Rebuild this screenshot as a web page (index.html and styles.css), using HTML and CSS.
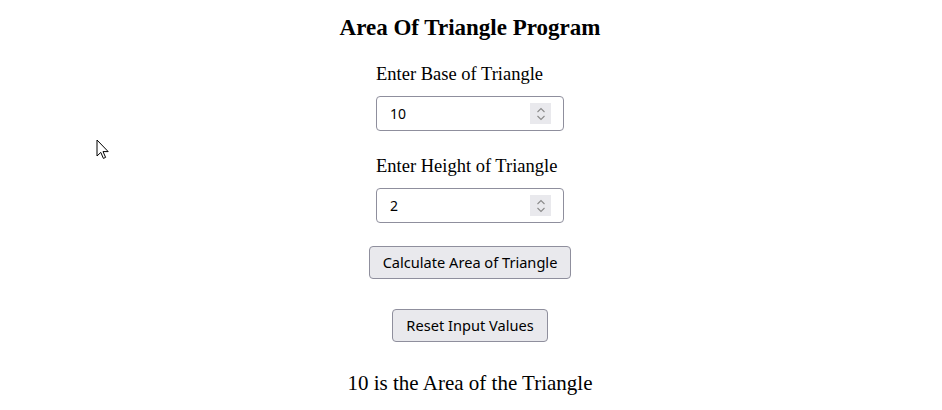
FILE: index.html
```html
<!DOCTYPE html>
<html>
<head>
<meta charset="utf-8">
<link rel="stylesheet" href="styles.css">
</head>
<body>
<div class="page">
  <h2 class="title">Area Of Triangle Program</h2>
  <div class="field">
    <label class="label" for="base">Enter Base of Triangle</label>
    <div class="numbox">
      <input id="base" class="num" type="text" value="10">
      <span class="spin"><svg width="14" height="20" viewBox="0 0 14 20"><path d="M3.5 8 L7 4.5 L10.5 8" fill="none" stroke="#8a8a8a" stroke-width="1.1"/><path d="M3.5 12 L7 15.5 L10.5 12" fill="none" stroke="#8a8a8a" stroke-width="1.1"/></svg></span>
    </div>
  </div>
  <div class="field second">
    <label class="label" for="height">Enter Height of Triangle</label>
    <div class="numbox">
      <input id="height" class="num" type="text" value="2">
      <span class="spin"><svg width="14" height="20" viewBox="0 0 14 20"><path d="M3.5 8 L7 4.5 L10.5 8" fill="none" stroke="#8a8a8a" stroke-width="1.1"/><path d="M3.5 12 L7 15.5 L10.5 12" fill="none" stroke="#8a8a8a" stroke-width="1.1"/></svg></span>
    </div>
  </div>
  <button class="btn calc">Calculate Area of Triangle</button>
  <button class="btn reset">Reset Input Values</button>
  <p class="result">10 is the Area of the Triangle</p>
</div>
<svg class="cursor" width="14" height="22" viewBox="0 0 14 22"><path d="M1 1 L1 17 L4.8 13.4 L7.4 19.4 L9.6 18.4 L7 12.6 L12.2 12.6 Z" fill="#fff" stroke="#000" stroke-width="1" stroke-linejoin="miter"/></svg>
</body>
</html>
```
FILE: styles.css
```css
html, body {
  margin: 0;
  padding: 0;
  background: #ffffff;
}
body {
  font-family: "Liberation Serif", "Times New Roman", serif;
  color: #000;
  position: relative;
  width: 942px;
  height: 410px;
  overflow: hidden;
}
.page {
  display: flex;
  flex-direction: column;
  align-items: center;
  padding-right: 2px;
}
.title {
  margin: 16px 0 0;
  font-size: 23px;
  line-height: 24px;
  font-weight: bold;
}
.field {
  width: 188px;
  display: flex;
  flex-direction: column;
  margin-top: 24px;
}
.field.second {
  margin-top: 25px;
}
.label {
  font-size: 18.5px;
  line-height: 20px;
  margin-bottom: 12px;
}
.numbox {
  box-sizing: border-box;
  height: 35px;
  border: 1px solid #8f8f9d;
  border-radius: 4px;
  display: flex;
  align-items: center;
  padding: 0 12px 0 13px;
  background: #fff;
}
.num {
  flex: 1;
  min-width: 0;
  border: none;
  outline: none;
  padding: 0;
  font-family: "Noto Sans", "Open Sans", sans-serif;
  font-size: 14px;
  color: #000;
  background: transparent;
}
.spin {
  width: 21px;
  height: 21px;
  background: #e9e9ed;
  display: flex;
  align-items: center;
  justify-content: center;
}
.btn {
  box-sizing: border-box;
  height: 33px;
  border: 1px solid #8f8f9d;
  border-radius: 4px;
  background: #e9e9ed;
  font-family: "Noto Sans", "Open Sans", sans-serif;
  font-size: 14.6px;
  color: #000;
  padding: 0 8px 2px;
}
.calc {
  margin-top: 23px;
  width: 202px;
}
.reset {
  margin-top: 30px;
  width: 156px;
}
.result {
  margin: 29px 0 0;
  font-size: 21px;
  line-height: 24px;
}
.cursor {
  position: absolute;
  left: 96px;
  top: 139px;
}
```
